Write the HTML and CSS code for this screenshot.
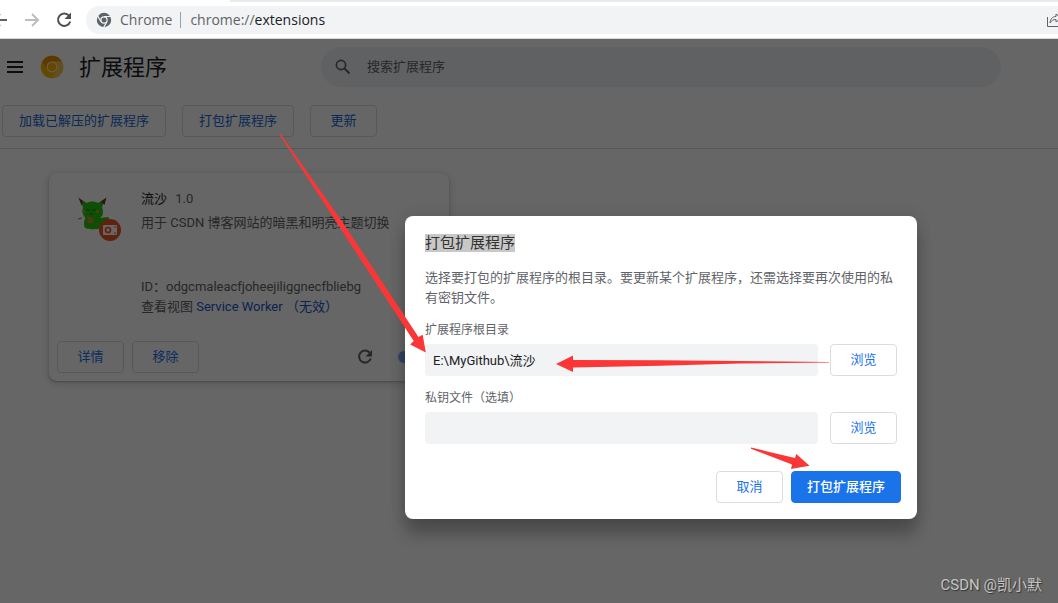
FILE: index.html
```html
<!DOCTYPE html>
<html lang="zh-CN">
<head>
<meta charset="utf-8">
<meta name="viewport" content="width=device-width, initial-scale=1">
<title>扩展程序</title>
<link rel="stylesheet" href="styles.css">
</head>
<body>
<div class="browser-bar">
  <nav class="nav-buttons" aria-label="浏览器导航">
    <button class="icon-button" aria-label="后退"><svg width="20" height="20" viewBox="0 0 20 20"><path d="M17 10H4M10 4l-6 6 6 6" fill="none" stroke="#5f6368" stroke-width="2"/></svg></button>
    <button class="icon-button" aria-label="前进"><svg width="20" height="20" viewBox="0 0 20 20"><path d="M3 10h13M10 4l6 6-6 6" fill="none" stroke="#bbbdc0" stroke-width="2"/></svg></button>
    <button class="icon-button" aria-label="重新加载"><svg width="20" height="20" viewBox="0 0 20 20"><path d="M15 5.700A6.200 6.200 0 1 0 16.200 11.500" fill="none" stroke="#4d5156" stroke-width="2"/><path d="M17 2.500V9h-6.500z" fill="#4d5156"/></svg></button>
  </nav>
  <div class="omnibox">
    <svg width="16" height="16" viewBox="0 0 16 16"><circle cx="8" cy="8" r="7.200" fill="#5f6368"/><circle cx="8" cy="8" r="3.700" fill="#f1f3f4"/><circle cx="8" cy="8" r="2.500" fill="#5f6368"/><path d="M8 4.500h7M5 9.700L1.500 3.600M11 9.700L7.500 15.600" stroke="#f1f3f4" stroke-width="1.200"/></svg>
    <span class="site-name">Chrome</span>
    <span class="url">chrome://<b>extensions</b></span>
    <button class="share" aria-label="分享"><svg width="16" height="16" viewBox="0 0 16 16"><path d="M1.500 5v9.500h13V11" fill="none" stroke="#5f6368"/><path d="M4 11c.3-4 2.500-6.500 6-6.500V2l5 4-5 4V7.500c-2.500 0-4.500.8-6 3.500z" fill="none" stroke="#5f6368"/></svg></button>
  </div>
</div>

<main class="page">
  <header class="page-header">
    <button class="icon-button menu" aria-label="主菜单"><svg width="16" height="12" viewBox="0 0 16 12"><path d="M0 1h16M0 6h16M0 11h16" stroke="#202124" stroke-width="2"/></svg></button>
    <svg class="logo" width="24" height="24" viewBox="0 0 24 24"><circle cx="12" cy="12" r="11.200" fill="#f4b400"/><path d="M2.300 6.400A11.200 11.200 0 0 1 21.700 6.400H12a5.600 5.600 0 0 0-5.200 7.600z" fill="#e88c00"/><path d="M21.700 6.400A11.200 11.200 0 0 1 11.700 23.200L17 14.500A5.600 5.600 0 0 0 12 6.400z" fill="#f6c550"/><circle cx="12" cy="12" r="5.500" fill="#ffe9a4"/><circle cx="12" cy="12" r="4.300" fill="#f4b400"/></svg>
    <h1 class="page-title">扩展程序</h1>
    <label class="search">
      <svg width="16" height="16" viewBox="0 0 16 16"><circle cx="6" cy="6" r="4.600" fill="none" stroke="#5f6368" stroke-width="1.700"/><path d="M9.500 9.500l5 5" stroke="#5f6368" stroke-width="2"/></svg>
      <input type="search" placeholder="搜索扩展程序" aria-label="搜索扩展程序">
    </label>
  </header>
  <div class="dev-toolbar">
    <button class="button">加载已解压的扩展程序</button>
    <button class="button">打包扩展程序</button>
    <button class="button short">更新</button>
  </div>
  <section class="extensions">
    <article class="card">
      <div class="card-main">
        <div class="extension-icon">
          <svg width="48" height="48" viewBox="0 0 48 48"><path d="M1 3.500L9 8c3-2 8-2 11 0l7.500-4.500L24 12c1 3 1.500 6 0 9l-2 2 8-1 1.500 2-3 7-4 1c-2 3-17 3-18 0-1-3-.5-7 1-9-3-3-3.500-7-2.500-11z" fill="#28c211"/><path d="M.5 2.500L5 6 3.500 10.500zM28.500 2.500L23 6.500l3.500 3.500z" fill="#753420"/><path d="M4 16.500h3M18 16.500h3" stroke="#d09a4a" stroke-width="2"/><path d="M8 14.500l4 1M14 15.500l4-1M11 19h4" stroke="#19860c" fill="none"/><path d="M9 21l4 1 3 3-2 3h-4z" fill="#c98a3c"/><path d="M0 24l4-1" stroke="#8a7b6b"/><circle cx="32" cy="35" r="11" fill="#ec5525"/><rect x="25" y="30" width="14" height="10" rx="1" fill="#fff"/><circle cx="30" cy="35" r="2.500" fill="none" stroke="#ec5525" stroke-width="1.700"/><path d="M37 31v2M37 37v2" stroke="#ec5525"/></svg>
        </div>
        <div class="card-text">
          <h2 class="extension-name">流沙 <span class="version">1.0</span></h2>
          <p class="description">用于 CSDN 博客网站的暗黑和明亮主题切换</p>
          <p>ID：odgcmaleacfjoheejiliggnecfbliebg</p>
          <p>查看视图 <a href="#worker">Service Worker （无效）</a></p>
        </div>
      </div>
      <div class="card-actions">
        <button class="button short">详情</button>
        <button class="button short">移除</button>
        <button class="icon-button reload" aria-label="重新加载扩展程序"><svg width="20" height="20" viewBox="0 0 20 20"><path d="M14.500 5.500A6 6 0 1 0 15.800 11.500" fill="none" stroke="#5f6368" stroke-width="2"/><path d="M17 3v6.500h-6.500z" fill="#5f6368"/></svg></button>
        <input class="toggle" type="checkbox" checked aria-label="启用流沙">
      </div>
    </article>
  </section>

  <div class="backdrop">
    <form class="dialog" role="dialog" aria-labelledby="dialog-title">
      <h2 class="dialog-title"><span id="dialog-title">打包扩展程序</span></h2>
      <p class="dialog-copy">选择要打包的扩展程序的根目录。要更新某个扩展程序，还需选择要再次使用的私有密钥文件。</p>
      <div class="field">
        <label for="root">扩展程序根目录</label>
        <div class="field-row">
          <input id="root" type="text" value="E:\MyGithub\流沙">
          <button type="button" class="button short">浏览</button>
        </div>
      </div>
      <div class="field">
        <label for="key">私钥文件（选填）</label>
        <div class="field-row">
          <input id="key" type="text">
          <button type="button" class="button short">浏览</button>
        </div>
      </div>
      <div class="dialog-actions">
        <button type="button" class="button short">取消</button>
        <button type="button" class="button primary">打包扩展程序</button>
      </div>
    </form>
  </div>
  <div class="watermark">CSDN @凯小默</div>
</main>
<svg class="annotations" width="1058" height="603" viewBox="0 0 1058 603" aria-hidden="true">
  <g fill="#fb3636">
    <path d="M279 134L280.500 134 342.500 222 418.500 337 422.700 334.800 425.800 352.500 410.200 344.500 413.700 341 337.500 224z"/>
    <path d="M829 362L660 360.200 573 360V355.500L556 364 573 372V367.500L660 365.800 740 363.500 829 362.600z"/>
    <path d="M751 447.500L795 458 796.300 454 809.500 465.800 791 469 792 464.500 751 448.700z"/>
  </g>
</svg>
</body>
</html>
```
FILE: styles.css
```css
* {
  box-sizing: border-box;
}

body {
  margin: 0;
  min-height: 100vh;
  display: flex;
  flex-direction: column;
  position: relative;
  overflow: hidden;
  font: 13px/20px Roboto, "Noto Sans CJK SC", sans-serif;
  color: #5f6368;
  background: #fff;
}

h1, h2, p {
  margin: 0;
  font-weight: 400;
}

button, input {
  font: inherit;
}

svg {
  display: block;
  flex: none;
}

a {
  color: #1a56c8;
  text-decoration: none;
}

.icon-button {
  display: flex;
  padding: 0;
  border: 0;
  background: none;
}

.browser-bar {
  display: flex;
  align-items: center;
  height: 39px;
  padding-top: 1px;
  border-bottom: 1px solid #d5d7d9;
  background: linear-gradient(#e8eaed, #e8eaed) 230px 0 / 100% 2px no-repeat #fff;
}

.nav-buttons {
  display: flex;
  gap: 12px;
  margin-left: -10px;
}

.omnibox {
  flex: 1;
  display: flex;
  align-items: center;
  height: 28px;
  margin-left: 12px;
  padding-left: 10px;
  border-radius: 14px 0 0 14px;
  background: #f1f3f4;
  font: 14px/18px "Open Sans", "Noto Sans", sans-serif;
  overflow: hidden;
}

.site-name {
  margin-left: 8px;
  padding-right: 8px;
  border-right: 1px solid #9aa0a6;
  line-height: 16px;
}

.url {
  margin-left: 9px;
}

.url b {
  font-weight: 400;
  color: #202124;
}

.share {
  margin-left: auto;
  margin-right: -4px;
  padding: 0;
  border: 0;
  background: none;
}

.page {
  flex: 1;
  position: relative;
}

.page-header {
  display: flex;
  align-items: center;
  height: 56px;
  padding: 0 57px 0 7px;
}

.logo {
  margin-left: 17px;
}

.page-title {
  width: 242px;
  margin-left: 15px;
  padding-top: 2px;
  font-size: 22px;
  line-height: 32px;
  color: #202124;
}

.search {
  flex: 1;
  display: flex;
  align-items: center;
  gap: 16px;
  height: 40px;
  padding: 0 14px;
  border-radius: 20px;
  background: #f1f3f4;
}

.search input {
  flex: 1;
  padding: 0;
  border: 0;
  outline: 0;
  background: none;
}

.search input::placeholder {
  color: #5f6368;
  opacity: 1;
}

.button {
  flex: none;
  height: 32px;
  padding: 0 16px 1px;
  border: 1px solid #dadce0;
  border-radius: 4px;
  background: #fff;
  color: #1a73e8;
}

.short {
  width: 67px;
}

.dev-toolbar {
  display: flex;
  gap: 16px;
  padding: 10px 2px 11px;
  border-bottom: 1px solid #d5d7da;
}

.dev-toolbar .button {
  color: #1967d2;
}

.extensions {
  padding: 24px 49px;
}

.card {
  display: flex;
  flex-direction: column;
  width: 400px;
  min-height: 208px;
  padding: 16px 8px 8px;
  border-radius: 8px;
  background: #fff;
  box-shadow: 0 1px 2px rgba(60, 64, 67, .3), 0 2px 6px 2px rgba(60, 64, 67, .15);
}

.card-main {
  flex: 1;
  display: flex;
}

.extension-icon {
  width: 84px;
  padding: 6px 21px;
}

.card-text {
  white-space: nowrap;
}

.extension-name {
  font-size: 13px;
  line-height: 20px;
  color: #202124;
}

.version {
  margin-left: 5px;
  color: #5f6368;
}

.description {
  margin: 4px 0 44px;
}

.card-actions {
  display: flex;
  align-items: center;
  gap: 8px;
}

.reload {
  margin-left: auto;
  margin-right: 15px;
}

.toggle {
  appearance: none;
  width: 26px;
  height: 12px;
  margin: 0 17px 0 0;
  border-radius: 6px;
  background: #7baaf7;
}

.backdrop {
  position: absolute;
  inset: 0;
  display: flex;
  justify-content: flex-end;
  align-items: flex-start;
  padding: 177px 141px 0 0;
  background: rgba(0, 0, 0, .6);
}

.dialog {
  width: 512px;
  padding: 18px 20px 16px;
  border-radius: 8px;
  background: #fff;
  box-shadow: 0 0 16px rgba(0, 0, 0, .12), 0 16px 16px rgba(0, 0, 0, .24);
}

.dialog-title {
  display: flex;
  font-size: 15px;
  line-height: 18px;
  color: #333;
}

.dialog-title span {
  background: #c8c8c8;
}

.dialog-copy {
  margin: 16px 0 12px;
}

.field {
  margin-bottom: 12px;
}

.field label {
  display: block;
  font-size: 12px;
  line-height: 20px;
  margin-bottom: 4px;
}

.field-row {
  display: flex;
  gap: 12px;
}

.field-row input {
  flex: 1;
  min-width: 0;
  height: 32px;
  padding: 0 8px 2px;
  border: 0;
  border-radius: 4px;
  background: #f1f3f4;
  color: #202124;
}

.dialog-actions {
  display: flex;
  justify-content: flex-end;
  gap: 8px;
  margin: 27px -4px 0 0;
}

.primary {
  padding: 0 15px 1px;
  border-color: #1a73e8;
  background: #1a73e8;
  color: #fff;
  font-weight: 500;
}

.watermark {
  position: absolute;
  right: 16px;
  bottom: 8px;
  font-size: 15px;
  line-height: 20px;
  color: #c4c4c4;
  text-shadow: 1px 1px 1px #333;
}

.annotations {
  position: absolute;
  top: 0;
  left: 0;
  pointer-events: none;
}
```
